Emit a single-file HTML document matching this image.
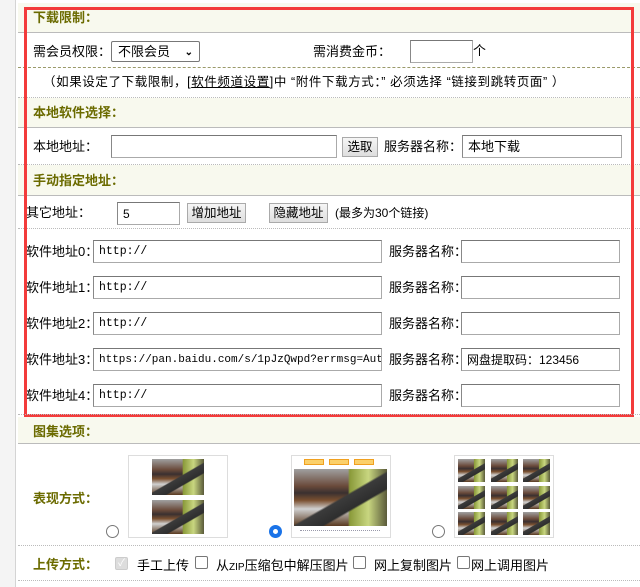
<!DOCTYPE html>
<html><head><meta charset="utf-8">
<style>
*{margin:0;padding:0;box-sizing:border-box}
body{width:640px;height:587px;position:relative;background:#fff;font-family:"Liberation Sans","Noto Sans CJK SC",sans-serif;font-size:13px;line-height:16px;color:#000;overflow:hidden}
.a{position:absolute;white-space:nowrap}
.hd{position:absolute;left:18px;width:622px;background:#f8f9ee;border-bottom:1px solid #bbb}
.ht{position:absolute;left:33px;font-weight:bold;color:#6b6b00;font-size:13px}
.in{position:absolute;height:23px;border:1px solid #aaa;border-top-color:#777;border-left-color:#888;background:#fff;font-size:12px;padding-left:5px;display:flex;align-items:center;white-space:nowrap;overflow:hidden}
.mono{font-family:"Liberation Mono","Noto Sans CJK SC",monospace;font-size:11.5px}
.btn{position:absolute;height:20px;border:1px solid #aaa;background:linear-gradient(#f6f6f6,#dedede);font-size:12.5px;text-align:center;line-height:18px}
.dot{position:absolute;left:18px;width:622px;border-top:1px dotted #bbb}
.th{position:absolute;background:
linear-gradient(150deg,transparent 50%,#3b3b3b 52%,#2e2e2e 66%,transparent 68%),
linear-gradient(90deg,transparent 58%,#8a9a3a 60%,#c8d680 80%,#5a5a3a 100%),
linear-gradient(180deg,#a0a0a0 0%,#6a4a3a 30%,#3a3030 42%,#7a5030 55%,#d0d0d0 70%,#5a3a20 100%)}
.radio{position:absolute;width:13px;height:13px;border:1px solid #777;border-radius:50%;background:#fff}
.cb{position:absolute;width:13px;height:13px;border:1px solid #777;border-radius:2px;background:#fff}
</style></head><body>
<div class="a" style="left:0;top:0;width:16px;height:587px;background:#f4f4f4;border-right:1px solid #d4d4d4"></div>

<div class="hd" style="top:3px;height:30px"></div>
<div class="ht a" style="top:10px">下载限制：</div>
<div class="a" style="left:33px;top:44px">需会员权限：</div>
<div class="in" style="left:111px;top:41px;width:89px;height:21px;border:1px solid #777;border-radius:2px;font-size:13px;padding-left:6px">不限会员<span style="position:absolute;right:6px;top:3px;font-size:10px;font-weight:bold">&#8964;</span></div>
<div class="a" style="left:313px;top:44px">需消费金币：</div>
<div class="in" style="left:410px;top:40px;width:63px"></div>
<div class="a" style="left:473px;top:43px">个</div>
<div class="a" style="left:18px;top:67px;width:622px;border-top:1px dashed #9a9a6a"></div>
<div class="a" style="left:43px;top:74px;font-size:12.5px;letter-spacing:0.6px">（如果设定了下载限制，[<u>软件频道设置</u>]中 “附件下载方式：” 必须选择 “链接到跳转页面” ）</div>
<div class="dot" style="top:97px"></div>

<div class="hd" style="top:98px;height:30px"></div>
<div class="ht a" style="top:105px">本地软件选择：</div>
<div class="a" style="left:33px;top:139px">本地地址：</div>
<div class="in" style="left:111px;top:135px;width:226px"></div>
<div class="btn" style="left:342px;top:137px;width:36px">选取</div>
<div class="a" style="left:384px;top:139px">服务器名称：</div>
<div class="in" style="left:462px;top:135px;width:160px;font-size:13px">本地下载</div>
<div class="dot" style="top:164px"></div>

<div class="hd" style="top:165px;height:31px"></div>
<div class="ht a" style="top:173px">手动指定地址：</div>
<div class="a" style="left:26px;top:205px">其它地址：</div>
<div class="in" style="left:117px;top:202px;width:63px;font-size:12px">5</div>
<div class="btn" style="left:187px;top:203px;width:59px">增加地址</div>
<div class="btn" style="left:269px;top:203px;width:59px">隐藏地址</div>
<div class="a" style="left:335px;top:205px;font-size:12px">(最多为30个链接)</div>
<div class="dot" style="top:228px"></div>

<div class="a" style="left:26px;top:244px">软件地址0：</div>
<div class="in mono" style="left:93px;top:240px;width:289px">http://</div>
<div class="a" style="left:389px;top:244px">服务器名称：</div>
<div class="in" style="left:461px;top:240px;width:159px"></div>

<div class="a" style="left:26px;top:280px">软件地址1：</div>
<div class="in mono" style="left:93px;top:276px;width:289px">http://</div>
<div class="a" style="left:389px;top:280px">服务器名称：</div>
<div class="in" style="left:461px;top:276px;width:159px"></div>

<div class="a" style="left:26px;top:316px">软件地址2：</div>
<div class="in mono" style="left:93px;top:312px;width:289px">http://</div>
<div class="a" style="left:389px;top:316px">服务器名称：</div>
<div class="in" style="left:461px;top:312px;width:159px"></div>

<div class="a" style="left:26px;top:352px">软件地址3：</div>
<div class="in mono" style="left:93px;top:348px;width:289px;font-size:11px">https://pan.baidu.com/s/1pJzQwpd?errmsg=Auth+Login</div>
<div class="a" style="left:389px;top:352px">服务器名称：</div>
<div class="in" style="left:461px;top:348px;width:159px;font-size:12px">网盘提取码：123456</div>

<div class="a" style="left:26px;top:388px">软件地址4：</div>
<div class="in mono" style="left:93px;top:384px;width:289px">http://</div>
<div class="a" style="left:389px;top:388px">服务器名称：</div>
<div class="in" style="left:461px;top:384px;width:159px"></div>

<div class="a" style="left:24px;top:7px;width:610px;height:410px;border:3px solid #f33b3b"></div>

<div class="dot" style="top:414px"></div>
<div class="hd" style="top:417px;height:27px"></div>
<div class="ht a" style="top:424px">图集选项：</div>
<div class="ht a" style="top:491px">表现方式：</div>

<div class="radio" style="left:106px;top:525px"></div>
<div class="a" style="left:128px;top:455px;width:100px;height:83px;border:1px solid #ddd"></div>
<div class="th" style="left:152px;top:459px;width:52px;height:36px"></div>
<div class="th" style="left:152px;top:500px;width:52px;height:34px"></div>

<div class="radio" style="left:269px;top:525px;border:4px solid #1a73e8"></div>
<div class="a" style="left:291px;top:455px;width:100px;height:83px;border:1px solid #ddd"></div>
<div class="a" style="left:304px;top:459px;width:20px;height:6px;background:#fbd06a;border:1px solid #f0a020"></div>
<div class="a" style="left:329px;top:459px;width:20px;height:6px;background:#fbd06a;border:1px solid #f0a020"></div>
<div class="a" style="left:354px;top:459px;width:20px;height:6px;background:#fbd06a;border:1px solid #f0a020"></div>
<div class="th" style="left:294px;top:469px;width:93px;height:57px"></div>
<div class="a" style="left:300px;top:530px;width:80px;border-top:1px dotted #99a"></div>

<div class="radio" style="left:432px;top:525px"></div>
<div class="a" style="left:454px;top:455px;width:100px;height:83px;border:1px solid #ddd"></div>
<div class="th" style="left:458px;top:459px;width:27px;height:23px"></div>
<div class="th" style="left:491px;top:459px;width:27px;height:23px"></div>
<div class="th" style="left:523px;top:459px;width:27px;height:23px"></div>
<div class="th" style="left:458px;top:486px;width:27px;height:23px"></div>
<div class="th" style="left:491px;top:486px;width:27px;height:23px"></div>
<div class="th" style="left:523px;top:486px;width:27px;height:23px"></div>
<div class="th" style="left:458px;top:512px;width:27px;height:23px"></div>
<div class="th" style="left:491px;top:512px;width:27px;height:23px"></div>
<div class="th" style="left:523px;top:512px;width:27px;height:23px"></div>

<div class="dot" style="top:545px"></div>
<div class="ht a" style="top:557px">上传方式：</div>
<div class="cb" style="left:115px;top:557px;background:#ddd;border-color:#ccc;color:#fff;font-size:10px;line-height:11px;text-align:center">✓</div>
<div class="a" style="left:137px;top:558px">手工上传</div>
<div class="cb" style="left:195px;top:556px"></div>
<div class="a" style="left:216px;top:558px">从<span style="font-size:10px">ZIP</span>压缩包中解压图片</div>
<div class="cb" style="left:353px;top:556px"></div>
<div class="a" style="left:374px;top:558px">网上复制图片</div>
<div class="cb" style="left:457px;top:556px"></div>
<div class="a" style="left:471px;top:558px">网上调用图片</div>
<div class="dot" style="top:580px"></div>
</body></html>
